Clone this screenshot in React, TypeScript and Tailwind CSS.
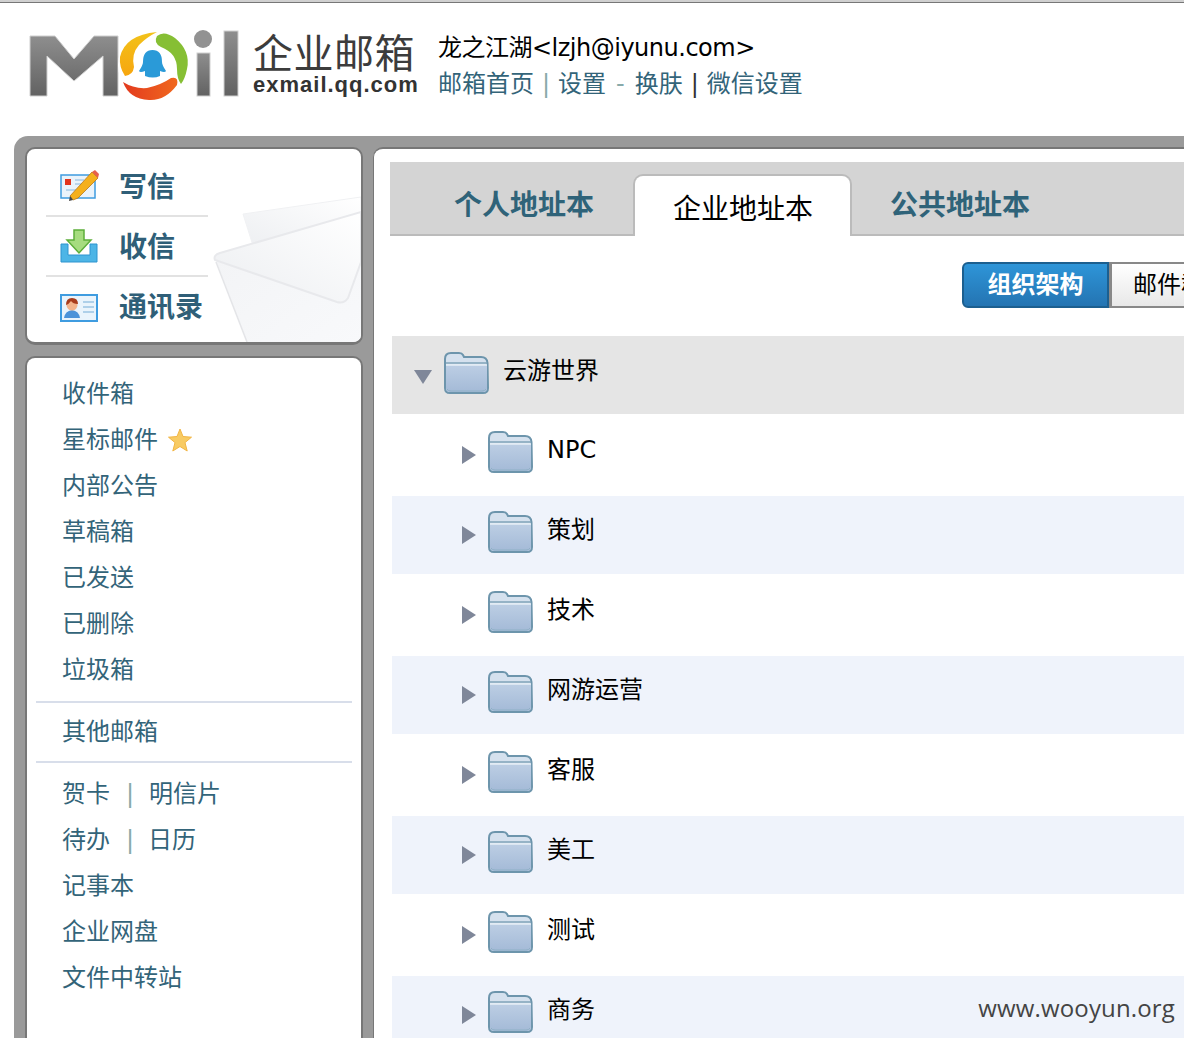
import type { ReactNode } from "react";

const zh = "font-['DejaVu_Sans','Noto_Sans_CJK_SC',sans-serif]";

const mailbox = ["收件箱", "星标邮件", "内部公告", "草稿箱", "已发送", "已删除", "垃圾箱"];
const folders = ["NPC", "策划", "技术", "网游运营", "客服", "美工", "测试", "商务"];

function Folder() {
    return (
        <svg width="46" height="44" viewBox="0 0 46 44" className="shrink-0">
            <defs>
                <linearGradient id="fb" x1="0" y1="0" x2="0" y2="1">
                    <stop offset="0" stopColor="#bccee4" />
                    <stop offset="1" stopColor="#a4bad7" />
                </linearGradient>
            </defs>
            <path d="M2 8 Q2 2 8 2 H16 Q19 2 20 4 L21 6 H38 Q44 6 44.5 12 L45 37 Q45 42 40 42 H7 Q2 42 2 37 Z" fill="#d5e1ee" stroke="#6d95ac" strokeWidth="2" />
            <path d="M3 12 H44" stroke="#7fa3b9" strokeWidth="1.5" />
            <path d="M3 14 H44 V37 Q44 41 40 41 H7 Q3 41 3 37 Z" fill="url(#fb)" />
            <path d="M3 14 H44" stroke="#e6eef6" strokeWidth="1.5" />
            <path d="M4 38 Q5 40 8 40 H39 Q42 40 43 38" stroke="#8fb0c6" fill="none" />
        </svg>
    );
}

function Logo() {
    return (
        <svg width="212" height="76" viewBox="0 0 212 76" className="shrink-0">
            <defs>
                <linearGradient id="gm" x1="0" y1="0" x2="0" y2="1">
                    <stop offset="0" stopColor="#8e8e8e" />
                    <stop offset="1" stopColor="#626262" />
                </linearGradient>
                <linearGradient id="gy" x1="0" y1="0" x2="0" y2="1">
                    <stop offset="0" stopColor="#f2c21a" />
                    <stop offset="1" stopColor="#f7a60f" />
                </linearGradient>
                <linearGradient id="gr" x1="0" y1="0" x2="1" y2="0">
                    <stop offset="0" stopColor="#e33a1e" />
                    <stop offset="1" stopColor="#f0681e" />
                </linearGradient>
            </defs>
            <path d="M1 7 H26 L45 30 L65 7 H89 V67 H74 V27 L45 52 L18 27 V67 H1 Z" fill="url(#gm)" stroke="#cfcfcf" strokeWidth="1" />
            <circle cx="125" cy="36" r="36" fill="#fff" />
            <path d="M96 47 Q90 38 91 28 Q96 6 128 3 Q118 8 110 16 Q102 25 105 38 Q104 46 96 47Z" fill="url(#gy)" />
            <path d="M128 7 Q135 1 146 9 Q162 22 158 40 Q156 50 152 55 Q148 50 148 40 Q148 24 132 18 Q124 14 128 7Z" fill="#86bf34" />
            <path d="M94 53 Q105 60 118 59 Q132 56 142 49 Q150 47 148 56 Q136 72 120 71 Q100 70 94 53Z" fill="url(#gr)" />
            <path d="M123.5 21 Q133 21 133 33 Q133 36 137 42 Q136 44 131 42 L131 47 Q124 50 116 47 L116 42 Q111 44 110 42 Q114 36 114 33 Q114 21 123.5 21Z" fill="#2a9ad8" />
            <circle cx="174" cy="10" r="9" fill="#929292" />
            <rect x="168" y="24" width="13" height="43" fill="url(#gm)" stroke="#cfcfcf" />
            <rect x="195" y="2" width="14" height="65" fill="url(#gm)" stroke="#cfcfcf" />
        </svg>
    );
}

function NavItem({ icon, label }: { icon: ReactNode; label: string }) {
    return (
        <div className="flex items-center h-[58px]">
            <div className="w-[92px] pl-[33px] shrink-0">{icon}</div>
            <span className="text-[28px] font-bold text-[#2f5f78] leading-none pt-[3px]">{label}</span>
        </div>
    );
}

function SideLink({ children }: { children: ReactNode }) {
    return <div className="h-[46px] flex items-center pl-[35px] text-[24px] text-[#336479]">{children}</div>;
}

export default function App() {
    return (
        <div className={`w-[1184px] h-[1038px] overflow-hidden bg-white ${zh}`}>
            <div className="h-[3px] bg-[#d0d0d0] border-b border-[#777]" />

            {/* header */}
            <div className="h-[133px] flex pl-[29px] pt-[26px]">
                <Logo />
                <div className="ml-[12px] mt-[5px] w-[170px] shrink-0">
                    <div className="text-[40px] leading-[40px] text-[#3c3c3c] tracking-[0.5px]">企业邮箱</div>
                    <div className="text-[22px] leading-[22px] font-bold text-[#333] font-['Liberation_Sans',sans-serif] tracking-[1px]">exmail.qq.com</div>
                </div>
                <div className="ml-[15px] pt-[1px]">
                    <div className="text-[24px] leading-[36px] text-black tracking-[-0.5px]">龙之江湖&lt;lzjh@iyunu.com&gt;</div>
                    <div className="text-[24px] leading-[36px] text-[#336479] flex">
                        <span>邮箱首页</span>
                        <span className="mx-[8px] text-[#8aa]">|</span>
                        <span>设置</span>
                        <span className="mx-[10px] text-[#8aa]">-</span>
                        <span>换肤</span>
                        <span className="mx-[8px] text-[#333]">|</span>
                        <span>微信设置</span>
                    </div>
                </div>
            </div>

            {/* grey shell */}
            <div className="ml-[14px] h-[902px] bg-[#9a9a9a] rounded-tl-[14px] pt-[11px] pl-[11px] flex gap-[10px]">
                <div className="w-[338px] shrink-0 flex flex-col gap-[11px]">
                    <div className="relative h-[198px] bg-white rounded-[10px] border-2 border-[#777] border-b-[3px] overflow-hidden pt-[8px]">
                        <svg width="150" height="150" viewBox="0 0 150 150" className="absolute right-0 bottom-0">
                            <defs>
                                <linearGradient id="env" x1="0" y1="1" x2="1" y2="0">
                                    <stop offset="0" stopColor="#eceef1" />
                                    <stop offset="1" stopColor="#ffffff" />
                                </linearGradient>
                                <linearGradient id="envb" x1="0" y1="0" x2="1" y2="1">
                                    <stop offset="0" stopColor="#f2f3f5" />
                                    <stop offset="1" stopColor="#f8f9fb" />
                                </linearGradient>
                            </defs>
                            <path d="M32 22 L150 5 V60 L44 60 Z" fill="url(#env)" stroke="#f0f1f3" />
                            <path d="M4 66 L150 30 V150 H36 Z" fill="url(#envb)" />
                            <path d="M4 68 Q2 63 9 61 L150 20 V70 L137 106 Q133 112 126 110 Z" fill="url(#env)" stroke="#e8e9ec" strokeWidth="2" />
                            <path d="M5 70 L36 150" stroke="#e4e5e8" strokeWidth="1.5" />
                        </svg>
                        <div className="relative">
                            <NavItem
                                label="写信"
                                icon={
                                    <svg width="40" height="32" viewBox="0 0 40 32">
                                        <rect x="1" y="5" width="34" height="23" fill="#eaf3fb" stroke="#3f9ce0" strokeWidth="1.5" />
                                        <rect x="5" y="9" width="6" height="6" fill="#e2341d" />
                                        <path d="M15 10 H24 M15 14 H22 M6 20 H16" stroke="#a9cbe8" strokeWidth="1.5" />
                                        <path d="M10 26 L13 30 L18 28 L38 8 L32 2 Z" fill="#f5b01c" stroke="#b7791a" strokeWidth="0.8" />
                                        <path d="M32 2 L35 0 L39 4 L38 8 Z" fill="#e8604c" />
                                        <path d="M10 26 L9 31 L13 30 Z" fill="#444" />
                                    </svg>
                                }
                            />
                            <div className="ml-[19px] w-[162px] h-[2px] bg-[#e2e2e2]" />
                            <NavItem
                                label="收信"
                                icon={
                                    <svg width="38" height="34" viewBox="0 0 38 34">
                                        <path d="M1 15 H8 V26 H30 V15 H37 V33 H1 Z" fill="#4db5e6" stroke="#2f94cf" />
                                        <path d="M14 1 H24 V11 H31 L19 24 L7 11 H14 Z" fill="#a6dc7f" stroke="#5cae3a" strokeWidth="1.5" />
                                    </svg>
                                }
                            />
                            <div className="ml-[19px] w-[162px] h-[2px] bg-[#e2e2e2]" />
                            <NavItem
                                label="通讯录"
                                icon={
                                    <svg width="38" height="28" viewBox="0 0 38 28" className="mt-[3px]">
                                        <rect x="1" y="1" width="36" height="26" fill="#eaf4fc" stroke="#3f9ce0" strokeWidth="2" />
                                        <path d="M4 24 Q5 17 12 16 Q19 17 20 24 Z" fill="#4c93d9" />
                                        <circle cx="12" cy="11" r="5.5" fill="#f3b48c" />
                                        <path d="M6 11 Q6 4 12 4 Q18 4 18 10 Q13 10 11 7 Q9 10 6 11 Z" fill="#a83c1c" />
                                        <path d="M23 8 H34 M23 13 H34 M23 18 H34" stroke="#9cc3e2" strokeWidth="1.5" />
                                    </svg>
                                }
                            />
                        </div>
                    </div>

                    <div className="flex-1 bg-white rounded-t-[10px] border-2 border-b-0 border-[#777] pt-[13px]">
                        {mailbox.map((m, i) => (
                            <SideLink key={m}>
                                {m}
                                {i === 1 && (
                                    <svg width="24" height="24" viewBox="0 0 24 24" className="ml-[10px]">
                                        <path d="M12 1 L15 8.5 L23.5 9.2 L17 14.6 L19.2 23 L12 18.5 L4.8 23 L7 14.6 L0.5 9.2 L9 8.5 Z" fill="#f8cb63" stroke="#f2b544" />
                                    </svg>
                                )}
                            </SideLink>
                        ))}
                        <div className="mx-[9px] h-[2px] bg-[#d8deea] mt-[8px] mb-[6px]" />
                        <SideLink>其他邮箱</SideLink>
                        <div className="mx-[9px] h-[2px] bg-[#d8deea] mt-[6px] mb-[8px]" />
                        <SideLink>
                            贺卡<span className="ml-[16px] mr-[15px] text-[#8aa]">|</span>明信片
                        </SideLink>
                        <SideLink>
                            待办<span className="ml-[16px] mr-[14px] text-[#8aa]">|</span>日历
                        </SideLink>
                        <SideLink>记事本</SideLink>
                        <SideLink>企业网盘</SideLink>
                        <SideLink>文件中转站</SideLink>
                    </div>
                </div>

                {/* right panel */}
                <div className="relative flex-1 bg-white rounded-tl-[10px] border-t-2 border-l border-[#777] pl-[16px] pt-[13px] overflow-hidden">
                    <div className="h-[74px] bg-[#d4d4d4] border-b-2 border-[#bbb] flex items-end pl-[36px]">
                        <div className="w-[207px] h-[62px] pt-[6px] flex items-center text-[28px] font-bold text-[#2f6379] pl-[28px]">个人地址本</div>
                        <div className="w-[219px] h-[62px] -mb-[2px] bg-white border-2 border-b-0 border-[#bbb] rounded-t-[10px] flex items-center pt-[8px] pl-[38px] text-[28px] text-black">企业地址本</div>
                        <div className="h-[62px] pt-[6px] flex items-center text-[28px] font-bold text-[#2f6379] pl-[38px]">公共地址本</div>
                    </div>

                    <div className="flex mt-[26px] ml-[572px] h-[46px] w-[400px]">
                        <div className="w-[147px] rounded-l-[6px] border-2 border-[#1c5f8f] bg-gradient-to-b from-[#2e95d8] to-[#2474b2] text-white text-[24px] font-bold flex items-center justify-center">组织架构</div>
                        <div className="w-[200px] border-2 border-l-[3px] border-[#888] bg-gradient-to-b from-white to-[#e8e8e8] text-black text-[24px] flex items-center pl-[21px]">邮件群组</div>
                    </div>

                    <div className="mt-[28px] ml-[2px] h-[78px] bg-[#e5e5e5] flex items-center">
                        <svg width="18" height="14" viewBox="0 0 18 14" className="ml-[22px] mt-[4px]">
                            <path d="M0 0 H18 L9 14 Z" fill="#7f8799" />
                        </svg>
                        <div className="ml-[11px] -mt-[5px]"><Folder /></div>
                        <span className="ml-[14px] text-[24px] text-black -mt-[9px]">云游世界</span>
                    </div>

                    {folders.map((f, i) => (
                        <div key={f} className={`mt-[2px] ml-[2px] h-[78px] flex items-center ${i % 2 === 1 ? "bg-[#eff3fb]" : "bg-white"}`}>
                            <svg width="14" height="18" viewBox="0 0 14 18" className="ml-[70px]">
                                <path d="M0 0 L14 9 L0 18 Z" fill="#7f8799" />
                            </svg>
                            <div className="ml-[11px] -mt-[7px]"><Folder /></div>
                            <span className="ml-[14px] text-[24px] text-black -mt-[11px]">{f}</span>
                        </div>
                    ))}

                    <div className="absolute right-[9px] bottom-[18px] text-[24px] leading-none text-[#444] font-['Open_Sans',sans-serif] tracking-[0.15px]">www.wooyun.org</div>
                </div>
            </div>
        </div>
    );
}
